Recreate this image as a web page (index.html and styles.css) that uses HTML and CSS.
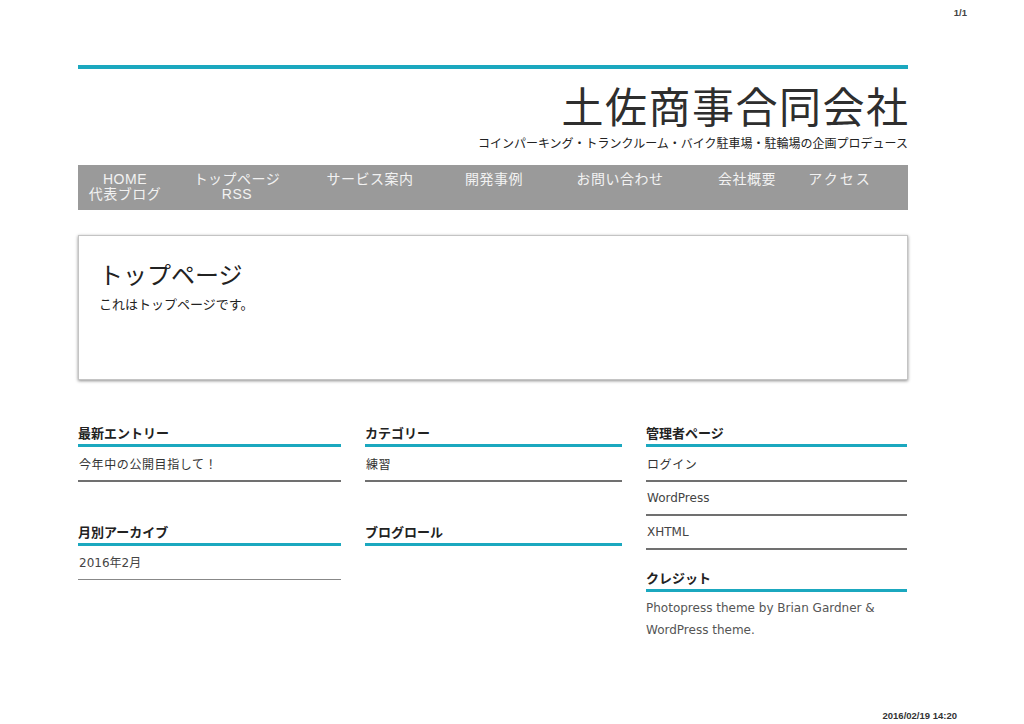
FILE: index.html
```html
<!DOCTYPE html>
<html lang="ja">
<head>
<meta charset="utf-8">
<title>土佐商事合同会社</title>
<link rel="stylesheet" href="styles.css">
</head>
<body>
<div class="sheet">
  <div class="print-head">1/1</div>
  <div class="page">
    <header class="site-header">
      <h1 class="site-title">土佐商事合同会社</h1>
      <p class="site-desc">コインパーキング・トランクルーム・バイク駐車場・駐輪場の企画プロデュース</p>
    </header>
    <nav class="nav">
      <ul class="nav-list">
        <li>HOME</li>
        <li>トップページ</li>
        <li>サービス案内</li>
        <li>開発事例</li>
        <li>お問い合わせ</li>
        <li>会社概要</li>
        <li class="wide">アクセス</li>
        <li>代表ブログ</li>
        <li>RSS</li>
      </ul>
    </nav>
    <main class="post">
      <h2 class="post-title">トップページ</h2>
      <p class="post-body">これはトップページです。</p>
    </main>
    <div class="sidebar">
      <div class="col">
        <section class="widget widget-tall">
          <h3 class="widget-title">最新エントリー</h3>
          <ul class="widget-list"><li class="jp">今年中の公開目指して！</li></ul>
        </section>
        <section class="widget">
          <h3 class="widget-title">月別アーカイブ</h3>
          <ul class="widget-list"><li class="light">2016年2月</li></ul>
        </section>
      </div>
      <div class="col">
        <section class="widget widget-tall">
          <h3 class="widget-title">カテゴリー</h3>
          <ul class="widget-list"><li class="jp">練習</li></ul>
        </section>
        <section class="widget">
          <h3 class="widget-title">ブログロール</h3>
        </section>
      </div>
      <div class="col">
        <section class="widget">
          <h3 class="widget-title">管理者ページ</h3>
          <ul class="widget-list">
            <li class="jp">ログイン</li>
            <li>WordPress</li>
            <li>XHTML</li>
          </ul>
        </section>
        <section class="widget">
          <h3 class="widget-title">クレジット</h3>
          <p class="credit">Photopress theme by Brian Gardner &amp; WordPress theme.</p>
        </section>
      </div>
    </div>
  </div>
  <div class="print-foot">2016/02/19 14:20</div>
</div>
</body>
</html>
```
FILE: styles.css
```css
html, body {
  margin: 0;
  padding: 0;
  background: #fff;
}
body {
  font-family: "Noto Sans CJK JP", "Liberation Sans", sans-serif;
  color: #333;
}
.sheet {
  height: 724px;
  display: flex;
  flex-direction: column;
  overflow: hidden;
}
.print-head {
  height: 65px;
  box-sizing: border-box;
  padding: 7px 57px 0 0;
  text-align: right;
  font-family: "Liberation Sans", sans-serif;
  font-weight: bold;
  font-size: 9.5px;
  line-height: 11px;
  color: #444;
}
.page {
  width: 830px;
  margin-left: 78px;
}
.site-header {
  border-top: 4px solid #1ba8bf;
  padding-top: 15px;
  text-align: right;
}
.site-title {
  margin: 0;
  font-size: 42px;
  line-height: 42px;
  font-weight: normal;
  letter-spacing: 1.5px;
  margin-right: -1.5px;
  color: #2e2e2e;
}
.site-desc {
  margin: 10px 0 0;
  font-size: 12px;
  line-height: 14px;
  color: #222;
}
.nav {
  margin-top: 15px;
  background: #9a9a9a;
  height: 45px;
  box-sizing: border-box;
  padding-top: 7px;
}
.nav-list {
  list-style: none;
  margin: 0;
  padding: 0;
  display: grid;
  grid-template-columns: 94px 130px 136px 112px 140px 114px 72px;
  font-family: "Liberation Sans", "Noto Sans CJK JP", sans-serif;
  font-size: 14px;
  line-height: 15px;
  color: #f2f2f2;
}
.nav-list li {
  text-align: center;
  white-space: nowrap;
  letter-spacing: 0.5px;
}
.nav-list li.wide {
  letter-spacing: 2px;
}
.post {
  margin-top: 25px;
  height: 145px;
  box-sizing: border-box;
  border: 1px solid #c4c4c4;
  box-shadow: 0 1px 3px rgba(0, 0, 0, 0.45);
  padding: 24px 20px 0;
}
.post-title {
  margin: 0;
  font-size: 24px;
  line-height: 28px;
  font-weight: normal;
  color: #222;
}
.post-body {
  margin: 7px 0 0;
  font-size: 13px;
  line-height: 18px;
  color: #222;
}
.sidebar {
  margin-top: 44px;
  display: grid;
  grid-template-columns: 263px 257px 261px;
  column-gap: 24px;
}
.widget {
  margin-bottom: 19px;
}
.widget-tall {
  margin-bottom: 41px;
}
.widget-title {
  margin: 0;
  font-size: 13px;
  line-height: 18px;
  font-weight: bold;
  color: #222;
  padding-bottom: 2px;
  border-bottom: 3px solid #1ba8bf;
}
.widget-list {
  list-style: none;
  margin: 1px 0 0;
  padding: 0;
}
.widget-list li {
  padding: 8px 1px;
  font-family: "DejaVu Sans", "Noto Sans CJK JP", sans-serif;
  font-size: 12px;
  line-height: 16px;
  color: #444;
  border-bottom: 2px solid #707070;
}
.widget-list li.jp {
  font-family: "Noto Sans CJK JP", sans-serif;
  letter-spacing: 0.6px;
  color: #333;
}
.widget-list li.light {
  border-bottom: 1px solid #888;
}
.credit {
  margin: 5px 0 0;
  font-family: "DejaVu Sans", sans-serif;
  font-size: 12px;
  line-height: 22px;
  color: #555;
}
.print-foot {
  margin-top: auto;
  padding: 0 67px 3px 0;
  text-align: right;
  font-family: "Liberation Sans", sans-serif;
  font-weight: bold;
  font-size: 9.5px;
  line-height: 11px;
  color: #333;
}
```
